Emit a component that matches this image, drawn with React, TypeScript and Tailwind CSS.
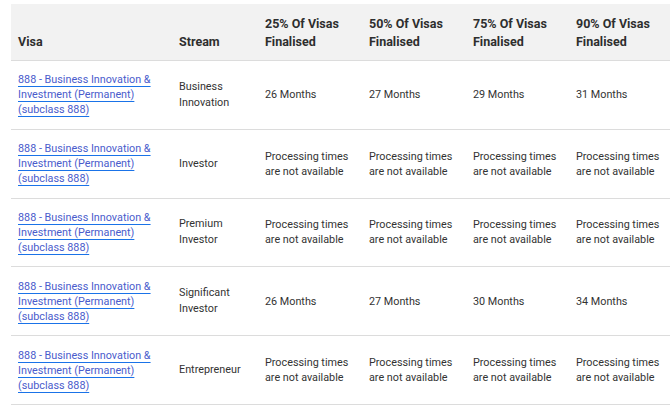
type Row = {
  stream: string[];
  values: (string | null)[];
};

const rows: Row[] = [
  { stream: ["Business", "Innovation"], values: ["26 Months", "27 Months", "29 Months", "31 Months"] },
  { stream: ["Investor"], values: [null, null, null, null] },
  { stream: ["Premium", "Investor"], values: [null, null, null, null] },
  { stream: ["Significant", "Investor"], values: ["26 Months", "27 Months", "30 Months", "34 Months"] },
  { stream: ["Entrepreneur"], values: [null, null, null, null] },
];

const percents = ["25%", "50%", "75%", "90%"];

function VisaLink() {
  return (
    <a
      href="#"
      className="text-[#4a5ccc] underline decoration-[#1a73e8] decoration-1 underline-offset-[3px]"
    >
      888 - Business Innovation &amp;
      <br />
      Investment (Permanent)
      <br />
      (subclass 888)
    </a>
  );
}

export default function App() {
  return (
    <div className="min-h-screen bg-white pt-1 pl-[11px] font-['Roboto','Liberation_Sans',sans-serif] text-[#333]">
      <table className="w-[659px] table-fixed border-collapse">
        <colgroup>
          <col className="w-[161px]" />
          <col className="w-[86px]" />
          <col className="w-[104px]" />
          <col className="w-[104px]" />
          <col className="w-[103px]" />
          <col className="w-[101px]" />
        </colgroup>
        <thead>
          <tr className="border-b border-[#dcdcdc] bg-[#f2f2f2] text-left align-bottom text-[12.5px] font-bold leading-[18px] text-[#2e2e2e]">
            <th className="pt-[10.5px] pb-[9.5px] pl-[7px] font-bold">Visa</th>
            <th className="pt-[10.5px] pb-[9.5px] pl-[7px] font-bold">Stream</th>
            {percents.map((p) => (
              <th key={p} className="pt-[10.5px] pb-[9.5px] pl-[7px] font-bold">
                {p} Of Visas
                <br />
                Finalised
              </th>
            ))}
          </tr>
        </thead>
        <tbody>
          {rows.map((row, i) => (
            <tr key={i} className="border-b border-[#dcdcdc] align-middle text-[10.8px] leading-[15px]">
              <td className="py-[11.4px] pl-[7px]">
                <VisaLink />
              </td>
              <td className="py-[11.4px] pl-[7px] leading-[16px]">
                {row.stream.map((s, j) => (
                  <div key={j}>{s}</div>
                ))}
              </td>
              {row.values.map((v, j) => (
                <td key={j} className="py-[11.4px] pl-[7px]">
                  {v ?? (
                    <>
                      Processing times
                      <br />
                      are not available
                    </>
                  )}
                </td>
              ))}
            </tr>
          ))}
        </tbody>
      </table>
    </div>
  );
}
